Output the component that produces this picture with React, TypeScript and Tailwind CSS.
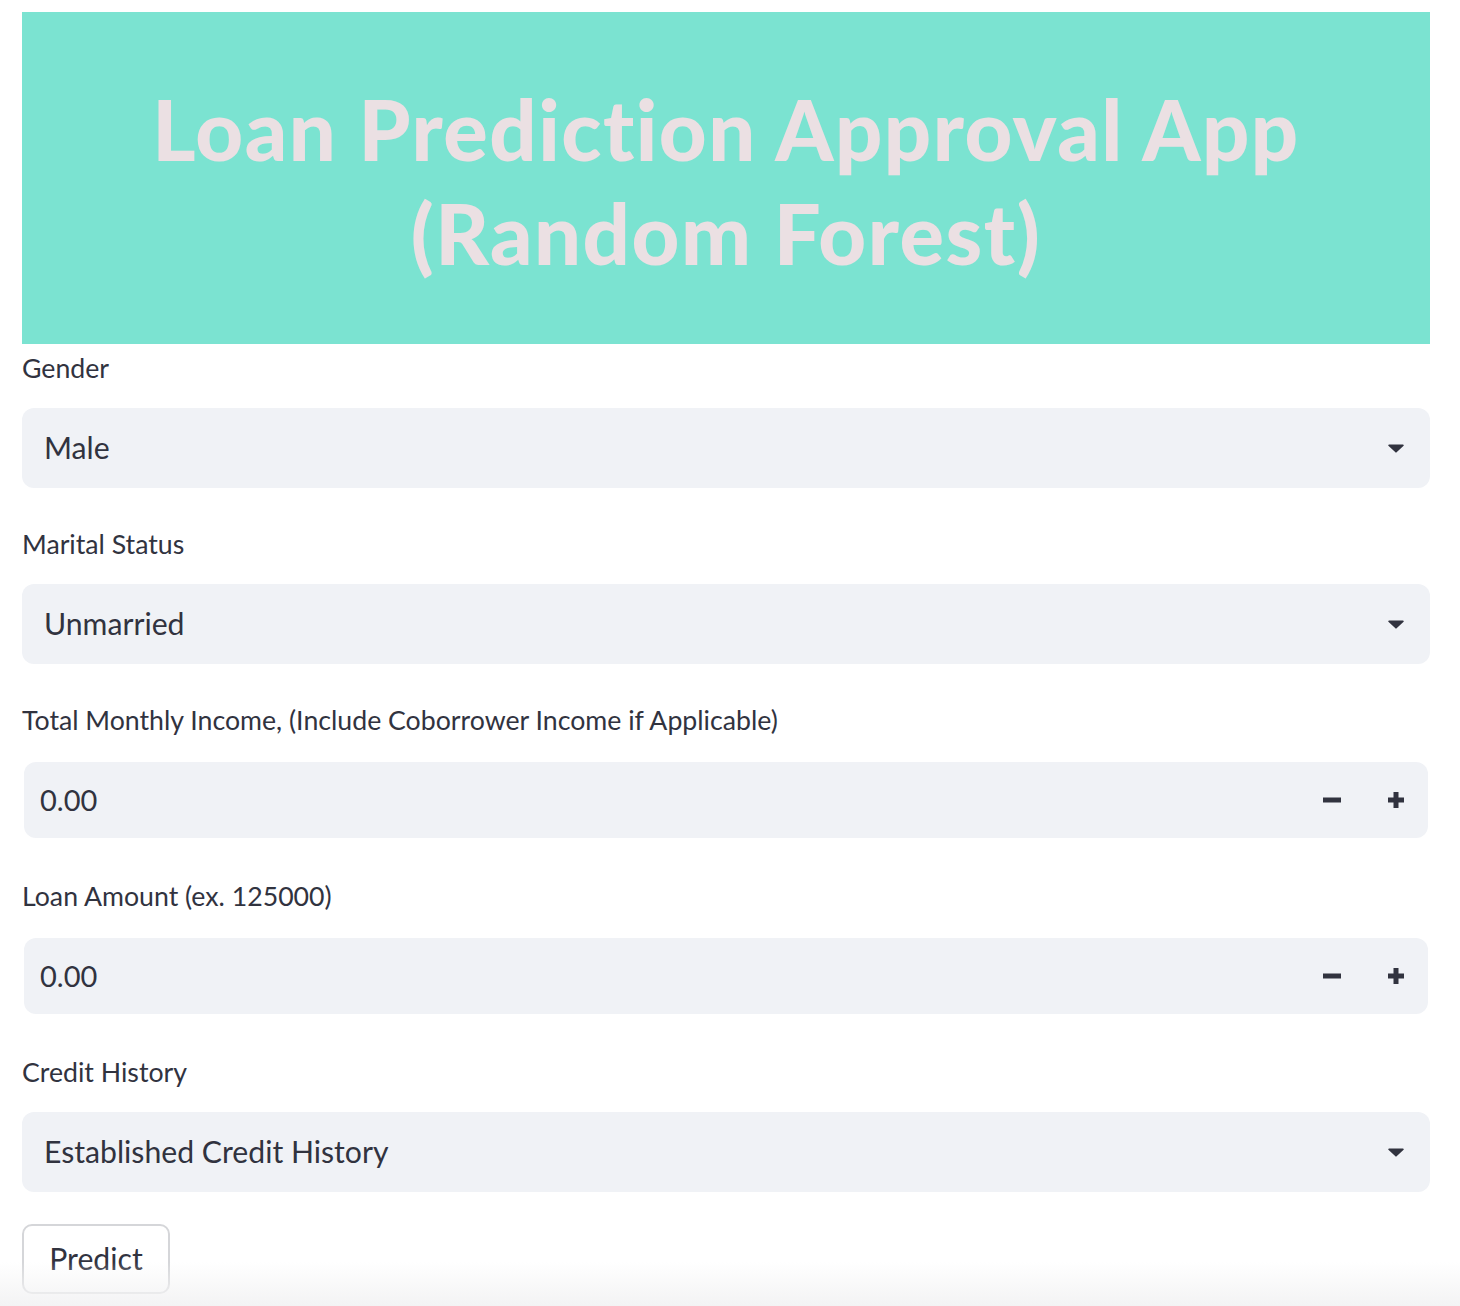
import React from "react";

const font = { fontFamily: "Lato, 'Noto Sans', sans-serif" };

function Caret() {
  return (
    <svg width="16" height="9" viewBox="0 0 16 9" className="shrink-0">
      <path d="M1 0.5 H15 a0.8 0.8 0 0 1 0.6 1.3 L8.6 8.3 a0.8 0.8 0 0 1 -1.2 0 L0.4 1.8 A0.8 0.8 0 0 1 1 0.5 Z" fill="#31333f" />
    </svg>
  );
}

function Minus() {
  return (
    <svg width="18" height="6" viewBox="0 0 18 6">
      <rect x="0" y="0.5" width="18" height="5" fill="#31333f" />
    </svg>
  );
}

function Plus() {
  return (
    <svg width="16" height="16" viewBox="0 0 16 16">
      <rect x="0" y="5.5" width="16" height="5" fill="#31333f" />
      <rect x="5.5" y="0" width="5" height="16" fill="#31333f" />
    </svg>
  );
}

function Label({ children }: { children: React.ReactNode }) {
  return (
    <div className="h-[48px] flex items-center text-[26.7px] text-[#31333f]">{children}</div>
  );
}

function Select({ label, value }: { label: string; value: string }) {
  return (
    <div className="flex flex-col">
      <Label>{label}</Label>
      <div className="mt-[16px] h-[80px] rounded-[12px] bg-[#f0f2f6] flex items-center justify-between pl-[22px] pr-[26px]">
        <span className="text-[30.2px] text-[#31333f]">{value}</span>
        <Caret />
      </div>
    </div>
  );
}

function NumberInput({ label }: { label: string }) {
  return (
    <div className="flex flex-col">
      <Label>{label}</Label>
      <div className="mt-[16px] h-[80px] p-[2px]">
        <div className="h-full rounded-[12px] bg-[#f0f2f6] flex items-center pl-[16px]">
          <span className="flex-1 text-[29px] text-[#31333f]">0.00</span>
          <div className="flex items-center h-full">
            <div className="w-[64px] h-full flex items-center justify-center">
              <Minus />
            </div>
            <div className="w-[64px] h-full flex items-center justify-center">
              <Plus />
            </div>
          </div>
        </div>
      </div>
    </div>
  );
}

export default function App() {
  return (
    <div className="relative w-[1460px] h-[1306px] overflow-hidden bg-white" style={font}>
      <div className="px-[22px] pt-[12px] w-[1452px]">
        <div className="h-[332px] bg-[#7be3d1] flex items-center justify-center">
          <h1 className="text-center font-black text-[83px] leading-[104px] text-[#ebe0e3] tracking-[1.5px] pt-[6px] whitespace-nowrap">
            Loan Prediction Approval App
            <br />
            (Random Forest)
          </h1>
        </div>
        <div className="flex flex-col gap-[32px]">
          <Select label="Gender" value="Male" />
          <Select label="Marital Status" value="Unmarried" />
          <NumberInput label="Total Monthly Income, (Include Coborrower Income if Applicable)" />
          <NumberInput label="Loan Amount (ex. 125000)" />
          <Select label="Credit History" value="Established Credit History" />
          <div>
            <button className="h-[70px] w-[148px] rounded-[10px] border-2 border-[#d5d6d9] bg-white text-[30.2px] text-[#31333f] flex items-center justify-center">
              Predict
            </button>
          </div>
        </div>
      </div>
      <div className="pointer-events-none absolute left-0 right-0 bottom-0 h-[44px] bg-gradient-to-b from-white/0 to-[#f3f3f4]" />
    </div>
  );
}
